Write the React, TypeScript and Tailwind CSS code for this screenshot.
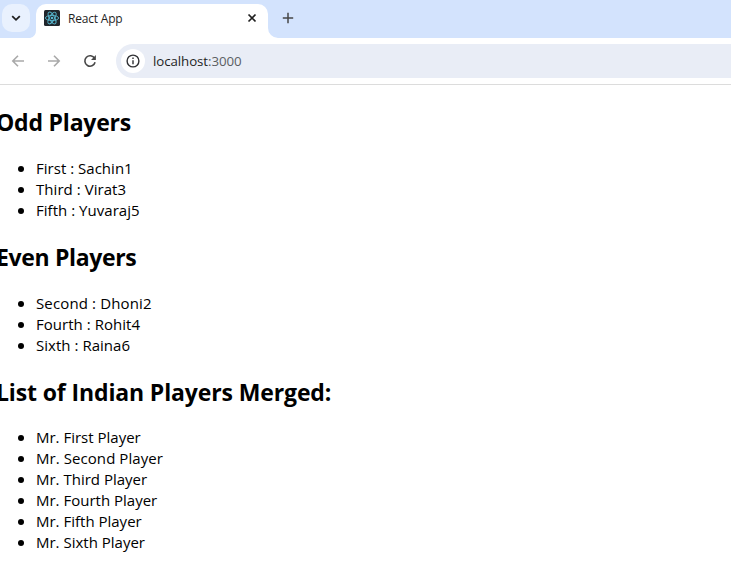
import React from "react";

type Item = { text: string; tracking: string };
type Group = { title: string; heading: string; gap: string; items: Item[] };

const groups: Group[] = [
  {
    title: "Odd Players",
    heading: "tracking-[-0.2px]",
    gap: "mt-5",
    items: [
      { text: "First : Sachin1", tracking: "tracking-[0.02px]" },
      { text: "Third : Virat3", tracking: "tracking-[0.05px]" },
      { text: "Fifth : Yuvaraj5", tracking: "tracking-[0.03px]" },
    ],
  },
  {
    title: "Even Players",
    heading: "tracking-[-0.35px]",
    gap: "mt-5",
    items: [
      { text: "Second : Dhoni2", tracking: "tracking-[0.13px]" },
      { text: "Fourth : Rohit4", tracking: "tracking-[0.03px]" },
      { text: "Sixth : Raina6", tracking: "tracking-[0.03px]" },
    ],
  },
  {
    title: "List of Indian Players Merged:",
    heading: "tracking-[-0.13px]",
    gap: "mt-[19px]",
    items: [
      { text: "Mr. First Player", tracking: "tracking-[0px]" },
      { text: "Mr. Second Player", tracking: "tracking-[0.07px]" },
      { text: "Mr. Third Player", tracking: "tracking-[0px]" },
      { text: "Mr. Fourth Player", tracking: "tracking-[0px]" },
      { text: "Mr. Fifth Player", tracking: "tracking-[0px]" },
      { text: "Mr. Sixth Player", tracking: "tracking-[0px]" },
    ],
  },
];

function ReactLogo() {
  return (
    <svg className="size-4" viewBox="0 0 16 16" fill="none" stroke="#58b8d0" strokeWidth="0.9">
      <rect width="16" height="16" rx="1.5" fill="#20262c" stroke="none" />
      <ellipse cx="8" cy="8" rx="6.6" ry="2.6" />
      <ellipse cx="8" cy="8" rx="6.6" ry="2.6" transform="rotate(60 8 8)" />
      <ellipse cx="8" cy="8" rx="6.6" ry="2.6" transform="rotate(120 8 8)" />
      <circle cx="8" cy="8" r="1.3" fill="#58b8d0" stroke="none" />
    </svg>
  );
}

function TabStrip() {
  return (
    <div className="flex h-[38px] bg-[#d3e3fd] pl-0.5">
      <div className="mt-1 flex size-7 items-center justify-center rounded-[10px] bg-[#e9f1fe]">
        <svg className="size-4" viewBox="0 0 16 16" fill="none" stroke="#1f1f1f" strokeWidth="1.8">
          <path d="M4.2 6.2 8 9.8l3.8-3.6" />
        </svg>
      </div>
      <svg className="-mr-0.5 mt-7 h-2.5 w-2" viewBox="0 0 8 10">
        <path d="M8 0v10H0a8 8 0 0 0 6-8V0z" fill="#fff" />
      </svg>
      <div className="mt-1 flex w-[232px] items-center rounded-t-[10px] bg-white pb-1.5 pl-2 pr-2.5">
        <ReactLogo />
        <span className="ml-2 mt-0.5 flex-1 whitespace-nowrap text-[12px] leading-4 tracking-[-0.2px] text-[#1f1f1f]">React App</span>
        <svg className="size-3" viewBox="0 0 12 12" fill="none" stroke="#1f1f1f" strokeWidth="1.7">
          <path d="m2.5 2.5 7 7m0-7-7 7" />
        </svg>
      </div>
      <svg className="mt-7 h-2.5 w-2.5" viewBox="0 0 10 10">
        <path d="M0 0v10h10A10 10 0 0 1 0 0z" fill="#fff" />
      </svg>
      <svg className="ml-1 mt-3 size-3" viewBox="0 0 12 12" fill="none" stroke="#474747" strokeWidth="1.5">
        <path d="M6 .8v10.4M.8 6h10.4" />
      </svg>
    </div>
  );
}

function Toolbar() {
  return (
    <div className="flex h-[47px] items-center border-b border-[#dcdcdc] bg-white pl-[11px]">
      <svg className="size-3.5" viewBox="0 0 14 14" fill="none" stroke="#a9a9a9" strokeWidth="1.6">
        <path d="M13 7H2.2M7 1.8 1.8 7 7 12.2" />
      </svg>
      <svg className="ml-[22px] size-3.5" viewBox="0 0 14 14" fill="none" stroke="#a9a9a9" strokeWidth="1.6">
        <path d="M1 7h10.8M7 1.8 12.2 7 7 12.2" />
      </svg>
      <svg className="ml-[22px] size-3.5" viewBox="0 0 14 14" fill="none" stroke="#474747" strokeWidth="1.6">
        <path d="M11.6 4.4A5.2 5.2 0 1 0 12.1 8.3" />
        <path d="M12.9 1v4.9H8z" fill="#474747" stroke="none" />
      </svg>
      <div className="ml-[19px] flex h-[34px] flex-1 items-center rounded-l-full bg-[#e9edf6] pl-[5px]">
        <div className="flex size-6 items-center justify-center rounded-full bg-white">
          <svg className="size-3.5" viewBox="0 0 14 14" fill="none" stroke="#303134" strokeWidth="1.4">
            <circle cx="7" cy="7" r="5.9" />
            <path d="M7 6.2v4M7 3.6v1.5" />
          </svg>
        </div>
        <div className="ml-2 whitespace-nowrap text-[13.3px] leading-5 tracking-[-0.08px] text-[#1f1f1f]">
          localhost<span className="text-[#5b5e63]">:3000</span>
        </div>
      </div>
    </div>
  );
}

function PlayerGroup({ group }: { group: Group }) {
  return (
    <section className="pt-5">
      <h2 className={`-ml-1 whitespace-nowrap text-[23px] font-bold leading-8 ${group.heading}`}>{group.title}</h2>
      <ul className={group.gap}>
        {group.items.map((item) => (
          <li key={item.text} className="flex h-[21px] items-center pl-[18px]">
            <span className="mr-3 size-1.5 rounded-full bg-black" />
            <span className={`whitespace-nowrap text-[15px] leading-[21px] ${item.tracking}`}>{item.text}</span>
          </li>
        ))}
      </ul>
    </section>
  );
}

export default function App() {
  return (
    <div className="h-[577px] w-full overflow-hidden bg-white font-['Open_Sans','Noto_Sans',sans-serif] text-black">
      <TabStrip />
      <Toolbar />
      <main className="pt-px">
        {groups.map((group) => (
          <PlayerGroup key={group.title} group={group} />
        ))}
      </main>
    </div>
  );
}
